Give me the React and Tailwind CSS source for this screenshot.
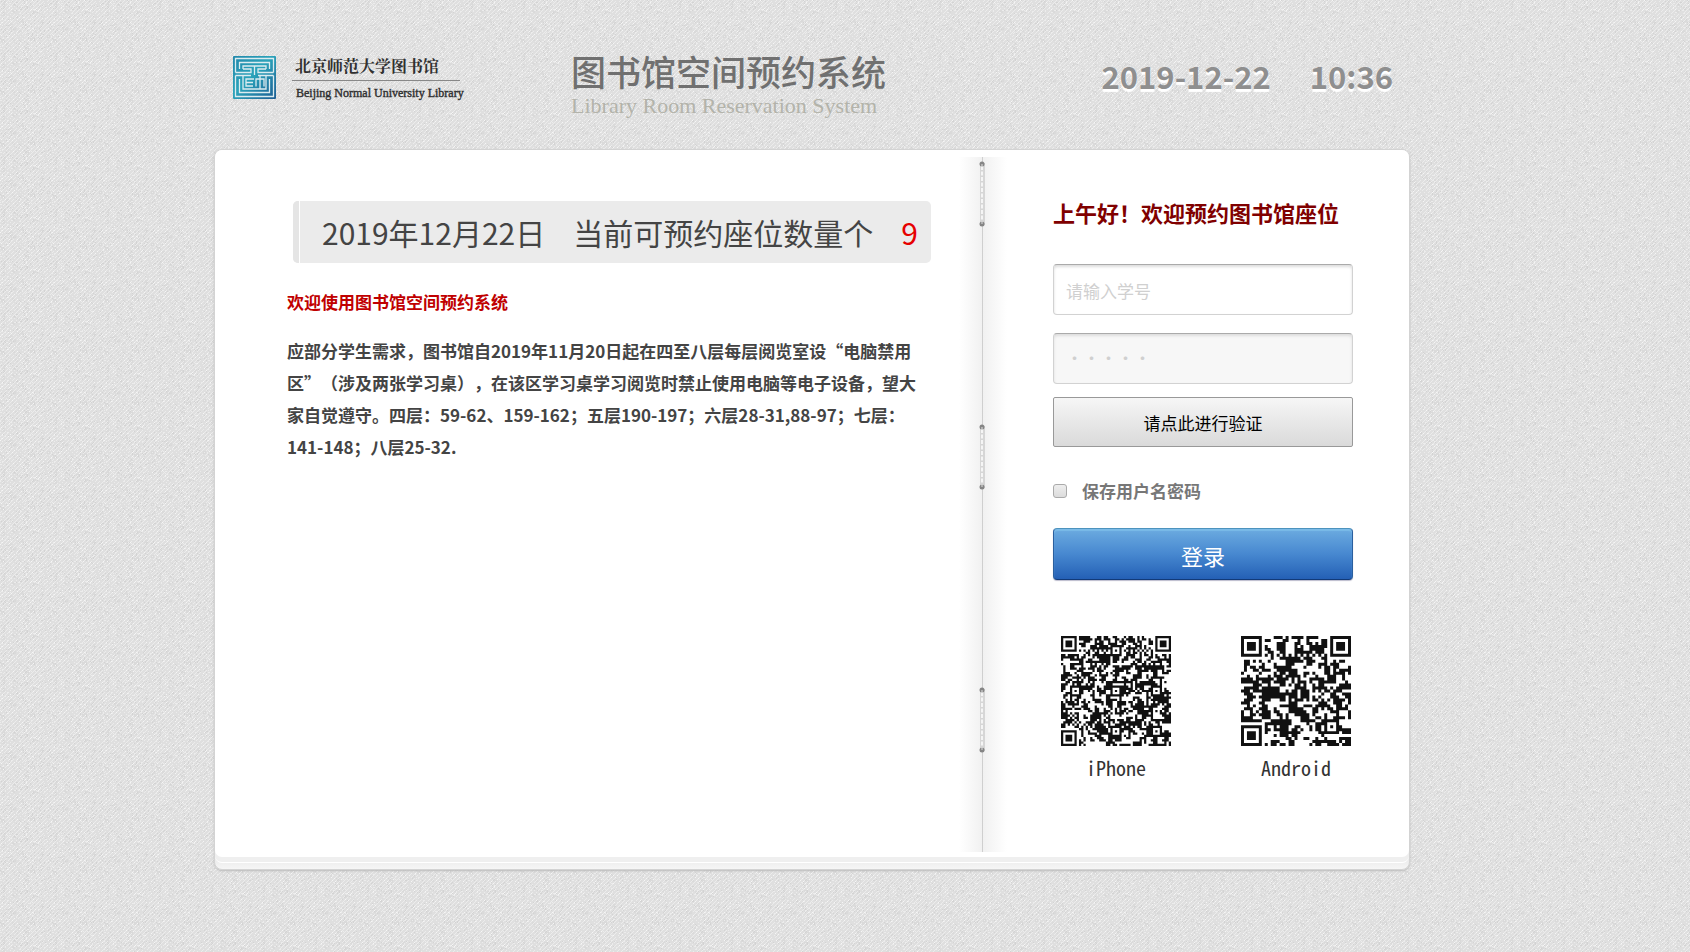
import React from "react";

function random(seed) {
  let s = seed;
  return () => {
    s = (s * 1664525 + 1013904223) % 4294967296;
    return s / 4294967296;
  };
}

function buildCode(size, aligns, seed) {
  const next = random(seed);
  const grid = [];
  for (let y = 0; y < size; y++) {
    grid.push([]);
    for (let x = 0; x < size; x++) {
      const keep = next();
      const fresh = next() < 0.55;
      if (x > 0 && keep < 0.16) grid[y].push(grid[y][x - 1]);
      else if (y > 0 && keep > 0.84) grid[y].push(grid[y - 1][x]);
      else grid[y].push(fresh);
    }
  }
  for (let i = 0; i < size; i++) {
    grid[6][i] = i % 2 === 0;
    grid[i][6] = i % 2 === 0;
  }
  const square = (cx, cy, r, quiet) => {
    for (let y = -quiet; y <= quiet; y++)
      for (let x = -quiet; x <= quiet; x++) {
        const row = grid[cy + y];
        if (!row || row[cx + x] === undefined) continue;
        const d = Math.max(Math.abs(x), Math.abs(y));
        row[cx + x] = d <= r && d !== r - 1;
      }
  };
  const last = size - 7;
  aligns.forEach(([x, y]) => square(x, y, 2, 2));
  square(3, 3, 3, 4);
  square(last + 3, 3, 3, 4);
  square(3, last + 3, 3, 4);
  let d = "";
  grid.forEach((row, y) => {
    let x = 0;
    while (x < size) {
      if (!row[x]) {
        x++;
        continue;
      }
      const start = x;
      while (x < size && row[x]) x++;
      d += `M${start} ${y}h${x - start}v1h-${x - start}z`;
    }
  });
  return d;
}

const codes = [
  {
    name: "iPhone",
    size: 49,
    path: buildCode(49, [[24, 6], [6, 24], [24, 24], [42, 24], [24, 42], [42, 42]], 81),
  },
  { name: "Android", size: 37, path: buildCode(37, [[30, 30]], 27) },
];

const TILE = 52;

function buildWeave() {
  const next = random(11);
  const layers = { light: "", bright: "", dark: "", shade: "" };
  const dot = (x, y, w = 1, h = 1) => `M${x} ${y}h${w}v${h}h-${w}z`;
  for (let y = 0; y < TILE; y++)
    for (let x = 0; x < TILE; x++) {
      const v = next();
      const onThread = (x + y) % 4 === 0;
      if (onThread && v < 0.72) layers.light += dot(x, y);
      if (onThread && v > 0.9) layers.bright += dot(x, y);
      if (!onThread && v < 0.07) layers.dark += dot(x, y);
      if (!onThread && v > 0.96) layers.light += dot(x, y);
    }
  for (let i = 0; i < 34; i++) layers.shade += dot(Math.floor(next() * 49), Math.floor(next() * 49), 3, 3);
  return layers;
}

const weave = buildWeave();

function Texture() {
  return (
    <svg className="absolute inset-0 h-full w-full" aria-hidden="true">
      <defs>
        <pattern id="weave" width={TILE} height={TILE} patternUnits="userSpaceOnUse">
          <rect width={TILE} height={TILE} fill="#dfdfdf" />
          <path d={weave.shade} fill="#dadada" />
          <path d={weave.dark} fill="#d3d3d3" />
          <path d={weave.light} fill="#ececec" />
          <path d={weave.bright} fill="#f6f6f6" />
        </pattern>
      </defs>
      <rect width="100%" height="100%" fill="url(#weave)" />
    </svg>
  );
}

function Seal() {
  return (
    <svg viewBox="0 0 43 43" className="h-[43px] w-[43px] shrink-0" aria-hidden="true">
      <defs>
        <linearGradient id="seal" x1="0" y1="0" x2="1" y2="1">
          <stop offset="0" stopColor="#2388ab" />
          <stop offset="0.45" stopColor="#2ba3ba" />
          <stop offset="1" stopColor="#1d5c93" />
        </linearGradient>
      </defs>
      <rect width="43" height="43" rx="1" fill="url(#seal)" />
      <g fill="none" stroke="#dcecf0" strokeWidth="1.3">
        <path d="M2.500 16.500V2.500h38v14M6.500 13V6.500h30V13M2.500 16.500H18V13h-8M40.500 16.500H25V13h8M10 13v-3h23v3M21.500 10v9" />
        <path d="M2.500 19.500H18M25 19.500h15.500M2.500 19.500v21h38v-21M6.500 23v13.500h30V23M10 20v13h23V20" />
        <path d="M21 23h-8v7h7M13 26.500h7M23 30.500V23h8v7.500M27 20v13" />
      </g>
    </svg>
  );
}

function Staple() {
  return (
    <svg viewBox="0 0 10 68" className="relative h-[68px] w-[10px]" aria-hidden="true">
      <rect x="3" y="3" width="5" height="62" fill="#d6d6d6" />
      <path d="M5 6v56" stroke="#fff" strokeWidth="1.5" strokeDasharray="4 1.500" />
      <circle cx="5" cy="4" r="2.500" fill="#858585" />
      <circle cx="5" cy="64" r="2.500" fill="#858585" />
      <path d="M5 4v3M5 61v3" stroke="#dedede" />
    </svg>
  );
}

const field =
  "block h-[51px] w-full rounded-[4px] border border-[#d2d2d2] border-t-[#aaa] px-3 text-[17px] text-[#444] shadow-[inset_0_2px_3px_#ddd] outline-none placeholder:text-[#d0d0d0] placeholder:opacity-100";

export default function App() {
  return (
    <div className="relative min-h-screen bg-[#dedede] pr-[66px] pb-20 font-['Noto_Sans_CJK_SC',sans-serif] text-[#444]">
      <Texture />
      <div className="relative mx-auto max-w-[1196px]">
        <header className="flex h-[149px] items-start justify-between pr-[17px] pl-[19px]">
          <a href="#home" className="mt-14 flex w-[338px] gap-4" aria-label="北京师范大学图书馆">
            <Seal />
            <span className="flex flex-col text-[#303030]">
              <span className="w-[168px] border-b border-[#888] pb-1 pl-[3px] font-['Noto_Serif_CJK_SC','Noto_Sans_CJK_SC',serif] text-base leading-5 font-bold whitespace-nowrap">
                北京师范大学图书馆
              </span>
              <span className="pt-1 pl-1 font-['Liberation_Serif',serif] text-xs leading-4 whitespace-nowrap [-webkit-text-stroke:0.4px_#303030]">
                Beijing Normal University Library
              </span>
            </span>
          </a>
          <h1 className="mt-12 flex-1 whitespace-nowrap">
            <span className="block text-[35px] leading-[46px] font-medium text-[#707070]">图书馆空间预约系统</span>
            <span className="block font-['Liberation_Serif',serif] text-[22px] leading-6 text-[#b3b3aa]">
              Library Room Reservation System
            </span>
          </h1>
          <p className="mt-[54px] flex gap-[39px] text-[31px] leading-[43px] font-bold text-[#8f8f8f] [text-shadow:0_3px_1px_#fff]">
            <span>2019-12-22</span>
            <span>10:36</span>
          </p>
        </header>

        <main className="rounded-[8px] border border-[#d3d3d3] bg-linear-to-t from-[#f6f6f6] to-[#e8e8e8] to-[12px] pb-[6px] shadow-[0_1px_2px_#bbb]">
          <div className="rounded-[7px] border-b border-white bg-[#efefef] pb-[5px]">
            <div className="grid min-h-[707px] grid-cols-[minmax(0,1fr)_48px_minmax(0,402px)] rounded-[7px] bg-white">
              <section className="pt-[51px] pr-7 pl-[72px]">
                <div className="ml-[6px] flex h-[62px] max-w-[639px] overflow-hidden rounded-[5px] bg-[#ebebeb] text-[30px] leading-[62px] whitespace-nowrap">
                  <span className="w-[7px] border-r border-white bg-[#e5e5e5]" />
                  <p className="flex flex-1 gap-7 pl-[22px]">
                    <span>2019年12月22日</span>
                    <span>当前可预约座位数量个</span>
                    <strong className="font-normal text-[#e60000]">9</strong>
                  </p>
                </div>
                <h2 className="mt-[23px] text-[17px] leading-8 font-bold text-[#c00000]">欢迎使用图书馆空间预约系统</h2>
                <p className="mt-[17px] max-w-[640px] text-[17px] leading-8 font-bold [text-spacing-trim:space-all]">
                  应部分学生需求，图书馆自2019年11月20日起在四至八层每层阅览室设“电脑禁用区”（涉及两张学习桌），在该区学习桌学习阅览时禁止使用电脑等电子设备，望大家自觉遵守。四层：59-62、159-162；五层190-197；六层28-31,88-97；七层：141-148；八层25-32.
                </p>
              </section>

              <div className="mt-[7px] mb-[5px] flex bg-[linear-gradient(90deg,#fff,#f1f1f1_23px,#cfcfcf_23px,#cfcfcf_24px,#f1f1f1_24px,#fff)] pt-[3px] pl-[18px]">
                <div className="flex flex-col gap-[195px]">
                  <Staple />
                  <Staple />
                  <Staple />
                </div>
              </div>

              <section className="pt-[46px] pr-14 pl-[46px]">
                <h2 className="text-[22px] leading-8 font-bold whitespace-nowrap text-[#800000]">上午好！欢迎预约图书馆座位</h2>
                <form className="mt-9" onSubmit={(e) => e.preventDefault()}>
                  <input aria-label="学号" type="text" placeholder="请输入学号" className={field + " bg-white pt-[2px]"} />
                  <input
                    aria-label="密码"
                    type="password"
                    placeholder="・・・・・"
                    className={field + " mt-[18px] bg-[#f7f7f7] pb-[3px]"}
                  />
                  <button
                    type="button"
                    className="mt-[13px] block h-[50px] w-full rounded-[2px] border border-[#999] bg-linear-to-b from-[#f6f6f6] to-[#dadada] pt-[2px] text-[17px] text-black"
                  >
                    请点此进行验证
                  </button>
                  <label className="mt-7 flex items-center gap-[15px] text-[17px] leading-8 font-bold text-[#777]">
                    <input
                      type="checkbox"
                      className="h-[14px] w-[14px] appearance-none rounded-[3px] border border-[#aaa] bg-linear-to-b from-[#eee] to-[#dcdcdc] checked:bg-[#3b7fc8]"
                    />
                    保存用户名密码
                  </label>
                  <button
                    type="submit"
                    className="mt-[21px] block h-[52px] w-full rounded-[4px] border border-t-[#4d93bd] border-r-[#2a5f9e] border-b-[#123a78] border-l-[#2a5f9e] bg-linear-to-b from-[#6cabe0] via-[#4788d0] to-[#2460b5] pt-[2px] text-[22px] text-white shadow-[inset_0_2px_1px_#7bbbe8,0_1px_1px_#bbc]"
                  >
                    登录
                  </button>
                </form>
                <div className="mt-14 flex justify-between pr-[2px] pl-2">
                  {codes.map((c) => (
                    <figure key={c.name} className="w-[110px]">
                      <svg viewBox={`0 0 ${c.size} ${c.size}`} className="h-[110px] w-full" role="img" aria-label={c.name}>
                        <path d={c.path} fill="#111" />
                      </svg>
                      <figcaption className="pt-2 text-center font-['Noto_Sans_Mono_CJK_SC','Liberation_Mono',monospace] text-xl leading-7 text-[#333]">
                        {c.name}
                      </figcaption>
                    </figure>
                  ))}
                </div>
              </section>
            </div>
          </div>
        </main>
      </div>
    </div>
  );
}
